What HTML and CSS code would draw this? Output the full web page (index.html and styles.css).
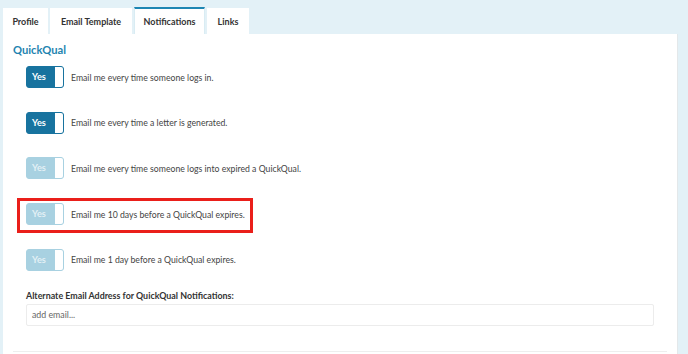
FILE: index.html
```html
<!DOCTYPE html>
<html>
<head>
<meta charset="utf-8">
<link rel="stylesheet" href="styles.css">
</head>
<body>
<div class="page">
  <div class="tabs">
    <div class="tab tab-profile">Profile</div>
    <div class="tab tab-email">Email Template</div>
    <div class="tab tab-notif active">Notifications</div>
    <div class="tab tab-links">Links</div>
  </div>
  <div class="panel">
    <h2 class="heading">QuickQual</h2>
    <div class="section">
      <div class="row"><div class="toggle on"><span class="yes">Yes</span><span class="knob"></span></div><span class="desc">Email me every time someone logs in.</span></div>
      <div class="row"><div class="toggle on"><span class="yes">Yes</span><span class="knob"></span></div><span class="desc">Email me every time a letter is generated.</span></div>
      <div class="row"><div class="toggle off"><span class="yes">Yes</span><span class="knob"></span></div><span class="desc">Email me every time someone logs into expired a QuickQual.</span></div>
      <div class="row highlight"><div class="toggle off"><span class="yes">Yes</span><span class="knob"></span></div><span class="desc">Email me 10 days before a QuickQual expires.</span></div>
      <div class="row"><div class="toggle off"><span class="yes">Yes</span><span class="knob"></span></div><span class="desc">Email me 1 day before a QuickQual expires.</span></div>
      <label class="alt-label">Alternate Email Address for QuickQual Notifications:</label>
      <div class="input">add email...</div>
    </div>
    <div class="rule"></div>
  </div>
</div>
</body>
</html>
```
FILE: styles.css
```css
html, body {
  margin: 0;
  padding: 0;
  background: #e3f1f7;
  font-family: Lato, "Open Sans", sans-serif;
  overflow: hidden;
}
.page {
  padding: 8px 10px 0 3px;
}
.tabs {
  display: flex;
  gap: 2px;
  height: 26px;
}
.tab {
  background: #fff;
  font-size: 9px;
  font-weight: 700;
  color: #333;
  display: flex;
  align-items: center;
  justify-content: center;
  box-sizing: border-box;
  height: 26px;
}
.tab-profile { width: 45px; }
.tab-email { width: 82px; }
.tab-notif { width: 71px; }
.tab-links { width: 42px; }
.tab.active {
  border-top: 2px solid #1d86b3;
  border-left: 1px solid #d9ecf3;
  border-right: 1px solid #d9ecf3;
  height: 27px;
  margin-top: -1px;
}
.panel {
  background: #fff;
  width: 675px;
  box-sizing: border-box;
  border-right: 1px solid #e4e8ea;
  padding: 8px 10px 0 10px;
  height: 330px;
}
.heading {
  margin: 0;
  font-size: 11.2px;
  line-height: 16px;
  font-weight: 700;
  color: #1e84b0;
}
.section {
  padding: 8px 13px 0 13px;
  display: flex;
  flex-direction: column;
  align-items: flex-start;
}
.row {
  display: inline-flex;
  align-items: center;
  gap: 7px;
  height: 22px;
  margin-bottom: 23.7px;
  position: relative;
}
.toggle {
  width: 38px;
  height: 22px;
  box-sizing: border-box;
  border-radius: 3px;
  display: flex;
  border: 1px solid;
}
.toggle.on { background: #18739f; border-color: #18739f; }
.toggle.off { background: #a8d1e1; border-color: #a8d1e1; }
.yes {
  flex: 1;
  font-size: 9.2px;
  font-weight: 700;
  color: #fff;
  line-height: 20px;
  padding-left: 5px;
}
.toggle.off .yes { color: #e3f0f5; }
.knob {
  width: 8px;
  background: #fff;
  border-radius: 0 2px 2px 0;
}
.desc {
  font-size: 8.7px;
  color: #444;
}
.highlight::after {
  content: "";
  position: absolute;
  left: -9px;
  right: -8px;
  top: -5px;
  bottom: -8px;
  border: 3px solid #ea1f1a;
}
.alt-label {
  margin-top: -4.5px;
  font-size: 8.9px;
  line-height: 12px;
  font-weight: 700;
  color: #333;
}
.input {
  margin-top: 2px;
  align-self: stretch;
  height: 22px;
  box-sizing: border-box;
  border: 1px solid #ececec;
  border-radius: 2px;
  font-size: 8.8px;
  color: #666;
  line-height: 20px;
  padding-left: 5px;
}
.rule {
  margin-top: 25px;
  height: 1px;
  background: #eeeeee;
}
```
